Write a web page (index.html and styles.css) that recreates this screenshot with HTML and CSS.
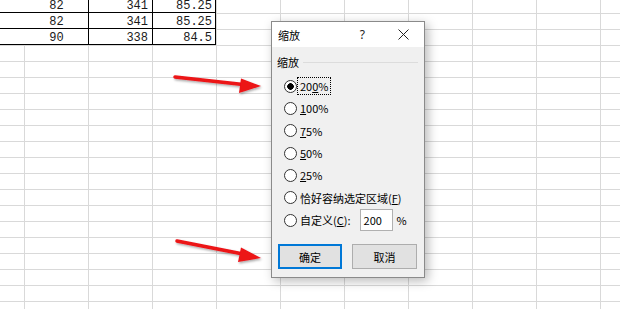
FILE: index.html
```html
<!DOCTYPE html>
<html lang="zh">
<head>
<meta charset="utf-8">
<link rel="stylesheet" href="styles.css">
</head>
<body>
<div class="sheet">
  <div class="data">
    <div class="row"><span class="pad"></span><span class="c c1">82</span><span class="c c2">341</span><span class="c c3">85.25</span></div>
    <div class="row"><span class="pad"></span><span class="c c1">82</span><span class="c c2">341</span><span class="c c3">85.25</span></div>
    <div class="row"><span class="pad"></span><span class="c c1">90</span><span class="c c2">338</span><span class="c c3">84.5</span></div>
  </div>
</div>

<svg class="arrows" width="620" height="309" viewBox="0 0 620 309">
  <defs>
    <filter id="sh" x="-20%" y="-50%" width="140%" height="200%">
      <feDropShadow dx="1" dy="1.5" stdDeviation="1.2" flood-color="#000" flood-opacity="0.35"/>
    </filter>
  </defs>
  <g filter="url(#sh)">
    <line x1="175" y1="77" x2="243" y2="84.5" stroke="#ec1218" stroke-width="3.5" stroke-linecap="round"/>
    <polygon points="261,86 241,78.5 239,93" fill="#ec1218"/>
  </g>
  <g filter="url(#sh)">
    <line x1="177" y1="241" x2="243" y2="254" stroke="#ec1218" stroke-width="3.5" stroke-linecap="round"/>
    <polygon points="261,258 241,247.5 238,262" fill="#ec1218"/>
  </g>
</svg>

<div class="dialog">
  <div class="titlebar">
    <span class="title">缩放</span>
    <span class="help">?</span>
    <svg class="close" width="11" height="11" viewBox="0 0 11 11"><path d="M0.5 0.5 L10.5 10.5 M10.5 0.5 L0.5 10.5" stroke="#222" stroke-width="1" fill="none"/></svg>
  </div>
  <div class="dbody">
    <div class="group"><span>缩放</span><span class="rule"></span></div>
    <div class="options">
      <div class="opt"><span class="radio on"></span><span class="txt focus">20<u>0</u>%</span></div>
      <div class="opt"><span class="radio"></span><span class="txt"><u>1</u>00%</span></div>
      <div class="opt"><span class="radio"></span><span class="txt"><u>7</u>5%</span></div>
      <div class="opt"><span class="radio"></span><span class="txt"><u>5</u>0%</span></div>
      <div class="opt"><span class="radio"></span><span class="txt"><u>2</u>5%</span></div>
      <div class="opt"><span class="radio"></span><span class="txt">恰好容纳选定区域(<u>F</u>)</span></div>
      <div class="opt"><span class="radio"></span><span class="txt">自定义(<u>C</u>):</span><span class="input">200</span><span class="pct">%</span></div>
    </div>
    <div class="buttons">
      <button class="btn ok">确定</button>
      <button class="btn cancel">取消</button>
    </div>
  </div>
</div>
</body>
</html>
```

FILE: styles.css
```css
html, body {
  margin: 0;
  height: 100%;
}
body {
  width: 620px;
  height: 309px;
  overflow: hidden;
  position: relative;
  background-color: #fff;
  background-image:
    linear-gradient(to right, #d9d9d9 1px, transparent 1px),
    linear-gradient(to bottom, #d9d9d9 1px, transparent 1px);
  background-size: 64px 100%, 100% 16px;
  background-position: 24px 0, 0 13px;
}

.sheet {
  display: block;
}
.data {
  margin-top: -3px;
  width: 216px;
}
.row {
  display: flex;
  height: 16px;
  box-sizing: border-box;
  border-bottom: 1px solid #000;
  background: #fff;
}
.pad {
  width: 25px;
  flex: none;
}
.c {
  flex: none;
  width: 64px;
  box-sizing: border-box;
  border-right: 1px solid #000;
  padding-top: 3px;
  font: 12px/12px "Liberation Mono", monospace;
  color: #1a1a1a;
}
.c1 { text-align: center; }
.c2 { text-align: right; padding-right: 4px; }
.c3 { width: 63px; text-align: right; padding-right: 3px; }

.arrows {
  position: absolute;
  left: 0;
  top: 0;
  pointer-events: none;
}

.dialog {
  position: absolute;
  left: 271px;
  top: 21px;
  width: 154px;
  height: 257px;
  box-sizing: border-box;
  border: 1px solid #8a8a8a;
  background: #f0f0f0;
  box-shadow: 3px 3px 10px rgba(0, 0, 0, 0.28);
  display: flex;
  flex-direction: column;
  font: 11px "Noto Sans CJK SC", sans-serif;
  color: #000;
}
.titlebar {
  height: 25px;
  flex: none;
  background: #fff;
  display: flex;
  align-items: center;
  padding: 0 15px 0 6px;
}
.title { line-height: 14px; }
.help {
  margin-left: auto;
  font: 12px "Noto Sans", sans-serif;
  color: #222;
}
.close {
  margin-left: 33px;
  display: block;
}

.dbody {
  flex: 1;
  display: flex;
  flex-direction: column;
  padding: 8px 6px 8px 5px;
}
.group {
  display: flex;
  align-items: center;
  height: 14px;
  line-height: 14px;
}
.rule {
  flex: 1;
  height: 1px;
  background: #dcdcdc;
  margin-left: 4px;
}
.options {
  margin-top: 6px;
  display: flex;
  flex-direction: column;
}
.opt {
  height: 22.33px;
  display: flex;
  align-items: center;
  padding-left: 7px;
}
.radio {
  width: 13px;
  height: 13px;
  flex: none;
  box-sizing: border-box;
  border: 1px solid #333;
  border-radius: 50%;
  background: #fff;
}
.radio.on {
  background: radial-gradient(circle, #000 0 3px, #fff 3.6px);
}
.txt {
  margin-left: 3px;
  line-height: 14px;
  white-space: nowrap;
}
.txt u {
  text-decoration-thickness: 1px;
  text-underline-offset: 1px;
}
.focus {
  outline: 1px dotted #000;
  outline-offset: 1px;
  padding: 0 1px;
  margin-left: 2px;
}
.input {
  margin-left: 9px;
  width: 33px;
  height: 22px;
  box-sizing: border-box;
  border: 1px solid #b0b0b0;
  background: #fff;
  padding-left: 3px;
  line-height: 20px;
}
.pct {
  margin-left: 4px;
}

.buttons {
  margin-top: auto;
  display: flex;
  gap: 10px;
  padding-left: 1px;
}
.btn {
  height: 25px;
  box-sizing: border-box;
  background: #e1e1e1;
  font: 11px "Noto Sans CJK SC", sans-serif;
  color: #000;
  padding: 0;
  margin: 0;
}
.ok {
  width: 64px;
  border: 2px solid #0078d7;
}
.cancel {
  width: 65px;
  border: 1px solid #adadad;
}
```
